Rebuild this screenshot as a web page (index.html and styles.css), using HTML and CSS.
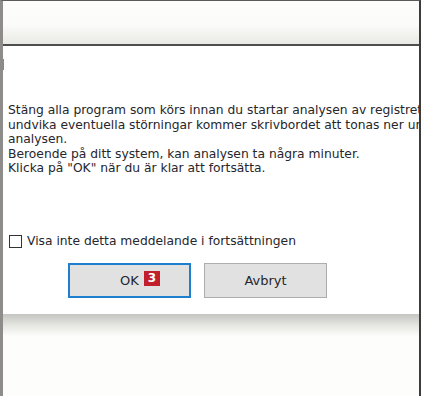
FILE: index.html
```html
<!DOCTYPE html>
<html>
  <head>
    <meta http-equiv="Content-Type" content="text/html;charset=UTF-8" />
    <meta name="viewport" content="width=device-width, initial-scale=1.0" />
    <title>Analys</title>
    <link rel="stylesheet" href="styles.css">
  </head>
  <body>
    <div class="screen">
      <div class="titlebar"></div>

      <div class="dialog">
        <div class="icon_stub"></div>

        <div class="message">
          Stäng alla program som körs innan du startar analysen av registret. För att<br />
          undvika eventuella störningar kommer skrivbordet att tonas ner under<br />
          analysen.<br />
          Beroende på ditt system, kan analysen ta några minuter.<br />
          Klicka på "OK" när du är klar att fortsätta.
        </div>

        <label class="dont_show">
          <span class="checkbox"></span>
          Visa inte detta meddelande i fortsättningen
        </label>

        <div class="buttons">
          <button class="button _default">OK<span class="badge">3</span></button>
          <button class="button">Avbryt</button>
        </div>
      </div>

      <div class="shadow"></div>
    </div>
  </body>
</html>
```

FILE: styles.css
```css
html {
  font-size: 12.3px;
  font-family: "DejaVu Sans", Verdana, sans-serif;
}
body {
  margin: 0;
  width: 421px;
  height: 396px;
  overflow: hidden;
  background-color: #fdfdfb;
  color: #26262c;
}

.screen {
  display: flex;
  flex-direction: column;
  height: 396px;
  box-sizing: border-box;
  border-top: 1px solid #5a5a5a;
  border-left: 3px solid #8e8c8b;
  border-right: 2px solid #3c3c3c;
  overflow: hidden;
}
.titlebar {
  flex: none;
  height: 43px;
  background: linear-gradient(#fdfdfb 0%, #fbfbf9 55%, #e9e9e5 100%);
  border-bottom: 2px solid #4e4e4e;
}

.dialog {
  flex: none;
  display: flex;
  flex-direction: column;
  height: 268px;
  background-color: #ffffff;
}
.icon_stub {
  flex: none;
  width: 2px;
  height: 11px;
  margin: 13px 0 0 -1px;
  background: linear-gradient(90deg, #2a6fb5, #d08a35);
}
.message {
  margin: 33px 0 0 5px;
  line-height: 14.5px;
  white-space: nowrap;
  overflow: hidden;
}
.dont_show {
  display: flex;
  align-items: center;
  gap: 5px;
  height: 15px;
  margin: 58px 0 0 6px;
}
.checkbox {
  width: 11px;
  height: 11px;
  border: 1px solid #333333;
  background-color: #ffffff;
}
.buttons {
  display: flex;
  gap: 13px;
  margin: 14px 0 0 65px;
}
.button {
  position: relative;
  width: 123px;
  height: 35px;
  border: 1px solid #adadad;
  background-color: #e1e1e1;
  font: inherit;
  font-size: 13px;
  color: #26262c;
  padding: 0;
}
.button._default {
  border: 2px solid #1f7fcf;
}
/* red step marker printed over the screenshot */
.badge {
  position: absolute;
  left: 74px;
  top: 6px;
  width: 16px;
  height: 15px;
  line-height: 15px;
  background-color: #c11f2b;
  color: #ffffff;
  font-weight: bold;
  font-size: 12px;
}

.shadow {
  flex: none;
  height: 22px;
  background: linear-gradient(#c4c5c0 0%, #e4e4e0 50%, #fdfdfb 100%);
}
```
